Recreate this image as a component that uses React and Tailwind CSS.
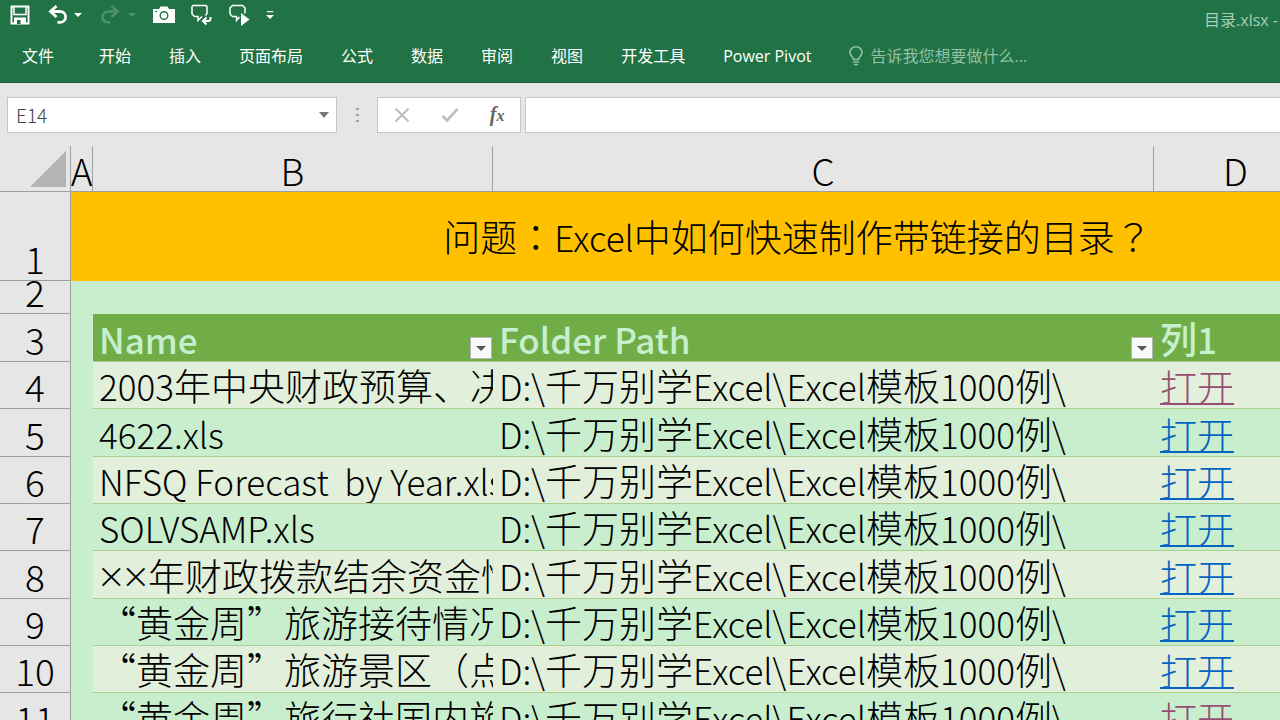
import { useState } from 'react'

const folder = 'D:\\千万别学Excel\\Excel模板1000例\\'

const files = [
  { row: 4, name: '2003年中央财政预算、决算收支.xls', visited: true },
  { row: 5, name: '4622.xls' },
  { row: 6, name: 'NFSQ Forecast  by Year.xls' },
  { row: 7, name: 'SOLVSAMP.xls' },
  { row: 8, prefix: '××', name: '年财政拨款结余资金情况.xls' },
  { row: 9, name: '“黄金周”旅游接待情况.xls' },
  { row: 10, name: '“黄金周”旅游景区（点）.xls' },
  { row: 11, name: '“黄金周”旅行社国内旅游.xls', visited: true },
]

const tabs = ['开始', '插入', '页面布局', '公式', '数据', '审阅', '视图', '开发工具', 'Power Pivot']

export default function App() {
  return (
    <div className="h-screen overflow-hidden flex flex-col bg-[#e6e6e6] text-black font-['Open_Sans','Noto_Sans_CJK_SC',sans-serif]">
      <Ribbon />
      <FormulaBar />
      <Sheet />
    </div>
  )
}

function Ribbon() {
  return (
    <header className="shrink-0 bg-[#217346] border-b border-[#1a5c38] text-white">
      <div className="flex items-center justify-between h-[30px]">
        <QuickAccess />
        <span className="pt-2.5 pr-0.5 text-[16px] leading-5 text-[#a9cdb8] whitespace-nowrap">目录.xlsx -</span>
      </div>
      <nav className="flex items-center h-[52px] text-[16px] leading-6 whitespace-nowrap">
        <button className="pl-[22px] pr-[26px]">文件</button>
        {tabs.map(tab => (
          <button key={tab} className="px-[19px]">{tab}</button>
        ))}
        <label className="flex items-center gap-1.5 pl-[18px] text-[#92c0a5]">
          <svg width="16" height="20" viewBox="0 0 16 20" fill="none" stroke="currentColor" strokeWidth="1.6">
            <path d="M5.5 13.5c0-2.5-3.5-3.700-3.500-7.200a6 5.500 0 0 1 12 0c0 3.500-3.500 4.700-3.500 7.200z" />
            <path d="M5 16h6M6 18.500h4" />
          </svg>
          <input
            aria-label="告诉我您想要做什么"
            placeholder="告诉我您想要做什么..."
            className="w-48 bg-transparent outline-none text-[16px] placeholder:text-[#92c0a5]"
          />
        </label>
      </nav>
    </header>
  )
}

function QuickAccess() {
  return (
    <div className="flex items-center pl-2.5">
      <button aria-label="保存">
        <svg width="20" height="20" viewBox="0 0 20 20" fill="none">
          <path d="M1.500 1.500h17v17h-17z" stroke="#fff" strokeWidth="2" />
          <path d="M4 2v7.500h12V2" stroke="#fff" strokeWidth="1.500" />
          <path d="M4 12.500h12V19H4z" fill="#fff" />
          <path d="M7 15h3.500V19H7z" fill="#217346" />
        </svg>
      </button>
      <button aria-label="撤消" className="flex items-center gap-1.5 ml-[18px]">
        <svg width="20" height="20" viewBox="0 0 20 20" fill="none" stroke="#fff" strokeWidth="2.800">
          <path d="M8.500 1L2.500 6.500L8.500 12M3 6.500h9a5.500 5.300 0 0 1 0 10.800H9.500" />
        </svg>
        <Caret className="w-2 h-1 text-white" />
      </button>
      <button aria-label="恢复" disabled className="flex items-center gap-2 ml-[18px]">
        <svg width="20" height="20" viewBox="0 0 20 20" fill="none" stroke="#4d9069" strokeWidth="2.600">
          <path d="M11.500 1L17.500 6.500L11.500 12M17 6.500H8a5.500 5.300 0 0 0 0 10.800h2.500" />
        </svg>
        <Caret className="w-2 h-1 text-[#4d9069]" />
      </button>
      <button aria-label="照相机" className="ml-[17px]">
        <svg width="22" height="20" viewBox="0 0 22 20">
          <path d="M0 4h6l1.500-2.500h7L16 4h6v14H0z" fill="#fff" />
          <circle cx="11" cy="10.500" r="3.800" fill="none" stroke="#217346" strokeWidth="1.400" />
          <path d="M2 6h2v1H2z" fill="#217346" />
        </svg>
      </button>
      <button aria-label="答复批注" className="ml-[15px]">
        <svg width="22" height="22" viewBox="0 0 22 22" fill="none" stroke="#fff">
          <path d="M12 12.500L8 16.500v-4H4.500l-2.500-2.500V2.500l1-1h13l1 1v7l-1.500 2" strokeWidth="1.500" />
          <path d="M20.500 13v1.500q0 2.500-2.500 2.500H13M16.500 13.500L13 17L16.500 20.500" strokeWidth="2" />
        </svg>
      </button>
      <button aria-label="下一条批注" className="ml-4">
        <svg width="22" height="22" viewBox="0 0 22 22" fill="none">
          <path d="M11.500 13l-3 3.500v-4H4.500l-2.500-2.500V4l2.500-2.500h10L17 4v5.500" stroke="#fff" strokeWidth="1.500" />
          <path d="M13 9l8.500 6.500l-8.500 6.500z" fill="#fff" />
        </svg>
      </button>
      <button aria-label="自定义快速访问工具栏" className="ml-4">
        <svg width="8" height="10" viewBox="0 0 8 10">
          <path d="M1 1h6v1.300H1zM0 5h8L4 9z" fill="#fff" />
        </svg>
      </button>
    </div>
  )
}

function Caret({ className }) {
  return (
    <svg className={className} viewBox="0 0 8 4" preserveAspectRatio="none">
      <path d="M0 0h8L4 4z" fill="currentColor" />
    </svg>
  )
}

function FormulaBar() {
  const [cell, setCell] = useState('E14')

  return (
    <div className="shrink-0 flex items-center h-[63px] pl-[7px]">
      <div className="flex items-center w-[330px] h-9 pr-[7px] bg-white border border-[#c6c6c6]">
        <input
          aria-label="名称框"
          value={cell}
          onChange={e => setCell(e.target.value)}
          className="flex-1 min-w-0 pl-2 outline-none bg-transparent text-[19px] leading-6 text-[#444] font-['Noto_Sans_CJK_SC',sans-serif] font-light"
        />
        <button aria-label="名称列表" className="flex">
          <Caret className="w-2.5 h-1.5 text-[#777]" />
        </button>
      </div>
      <div className="flex flex-col gap-1 w-10 items-center">
        <span className="w-[3px] h-0.5 bg-[#a0a0a0]" />
        <span className="w-[3px] h-0.5 bg-[#a0a0a0]" />
        <span className="w-[3px] h-0.5 bg-[#a0a0a0]" />
      </div>
      <div className="flex items-center justify-around w-36 h-9 bg-white border border-[#c6c6c6]">
        <button aria-label="取消">
          <svg width="16" height="16" viewBox="0 0 16 16" fill="none" stroke="#c0c0c0" strokeWidth="2.200">
            <path d="M1.500 1.500l13 13M14.500 1.500L1.500 14.500" />
          </svg>
        </button>
        <button aria-label="输入">
          <svg width="18" height="16" viewBox="0 0 18 16" fill="none" stroke="#c0c0c0" strokeWidth="2.800">
            <path d="M1.500 9l4.500 4.500L16.500 2" />
          </svg>
        </button>
        <button aria-label="插入函数" className="font-['Liberation_Serif',serif] italic font-bold text-[20px] leading-6 text-[#666]">
          f<span className="text-[16px]">x</span>
        </button>
      </div>
      <input aria-label="编辑栏" className="flex-1 min-w-0 h-9 ml-1 px-2 bg-white border border-r-0 border-[#c6c6c6] outline-none" />
    </div>
  )
}

function Sheet() {
  return (
    <main className="flex-1 min-h-0 overflow-hidden">
      <table className="table-fixed w-[1524px] border-separate border-spacing-0 text-[37px] leading-[44px] font-light font-['Noto_Sans_CJK_SC',sans-serif]">
        <colgroup>
          <col className="w-[71px]" />
          <col className="w-[22px]" />
          <col className="w-[400px]" />
          <col className="w-[661px]" />
          <col className="w-[164px]" />
          <col className="w-[206px]" />
        </colgroup>
        <thead>
          <tr>
            <th className="p-0 border-b border-r border-[#9f9f9f]">
              <div className="flex justify-end items-end h-[45px] pr-1 pb-1">
                <svg width="36" height="36" viewBox="0 0 36 36">
                  <path d="M36 0v36H0z" fill="#b4b4b4" />
                </svg>
              </div>
            </th>
            {['A', 'B', 'C', 'D', 'E'].map(col => (
              <th key={col} scope="col" className="p-0 border-b border-r border-[#9f9f9f] font-light">
                <div className="flex justify-center items-end h-[45px] leading-[42px] overflow-hidden">{col}</div>
              </th>
            ))}
          </tr>
        </thead>
        <tbody>
          <tr>
            <RowHeader row={1} height="h-[88px]" />
            <td colSpan={5} className="p-0 bg-[#ffc000] text-center">
              问题<Mark>：</Mark>
              <Mixed text="Excel中如何快速制作带链接的目录" />
              <Mark>？</Mark>
            </td>
          </tr>
          <tr>
            <RowHeader row={2} height="h-8" />
            <td colSpan={5} className="p-0 bg-[#c8eece]" />
          </tr>
          <tr className="text-[#c6efce]">
            <RowHeader row={3} height="h-[47px]" />
            <td className="p-0 bg-[#c8eece]" />
            <HeadCell label="Name" filter />
            <HeadCell label="Folder Path" filter />
            <HeadCell label="列1" />
            <HeadCell label="" />
          </tr>
          {files.map(file => (
            <FileRow key={file.row} file={file} />
          ))}
        </tbody>
      </table>
    </main>
  )
}

// Latin runs are set a little smaller than the Chinese around them
function Mixed({ text }) {
  return (
    <span>
      {text.split(/([\x20-\x7e]+)/).map((part, i) => (
        i % 2 ? <span key={i} className="text-[35px]">{part}</span> : part
      ))}
    </span>
  )
}

// full-width punctuation centred in its square
function Mark({ children }) {
  return <span className="font-['Noto_Sans_CJK_TC',sans-serif]">{children}</span>
}

function RowHeader({ row, height }) {
  return (
    <th scope="row" className="p-0 border-b border-r border-[#9f9f9f] bg-[#e6e6e6] text-black font-light">
      <div className={`flex justify-center items-end overflow-hidden ${height}`}>{row}</div>
    </th>
  )
}

function HeadCell({ label, filter }) {
  return (
    <td className="p-0 bg-[#70ad47] border-b border-[#a9d08e] font-medium">
      <div className="flex items-end justify-between h-[47px] pl-1.5 overflow-hidden">
        <Mixed text={label} />
        {filter && (
          <button aria-label={`筛选 ${label}`} className="flex items-center justify-center w-[22px] h-[22px] mr-px mb-0.5 bg-[#fafafd] border border-[#b5b5b5]">
            <Caret className="w-2.5 h-[5px] text-[#555]" />
          </button>
        )}
      </div>
    </td>
  )
}

function FileRow({ file }) {
  // zoomed rows are 47.3px tall, so every third one takes the spare pixel
  const height = file.row % 3 === 2 ? 'h-[47px]' : 'h-[46px]'
  const band = file.row % 2 === 0 ? 'bg-[#e2efda]' : 'bg-[#c8eece]'
  const cell = `p-0 border-b border-[#a9d08e] ${band}`
  const inner = `flex items-end pl-1.5 overflow-hidden whitespace-pre ${height}`

  return (
    <tr>
      <RowHeader row={file.row} height={height} />
      <td className="p-0 bg-[#c8eece]" />
      <td className={cell}>
        <div className={inner}>
          {file.prefix && <span className="font-['Open_Sans',sans-serif] text-[43px]">{file.prefix}</span>}
          <Mixed text={file.name} />
        </div>
      </td>
      <td className={cell}><div className={inner}><Mixed text={folder} /></div></td>
      <td className={cell}>
        <div className={inner}>
          <a href="#open" className={`underline decoration-2 ${file.visited ? 'text-[#954f72]' : 'text-[#0563c1]'}`}>打开</a>
        </div>
      </td>
      <td className={cell} />
    </tr>
  )
}
